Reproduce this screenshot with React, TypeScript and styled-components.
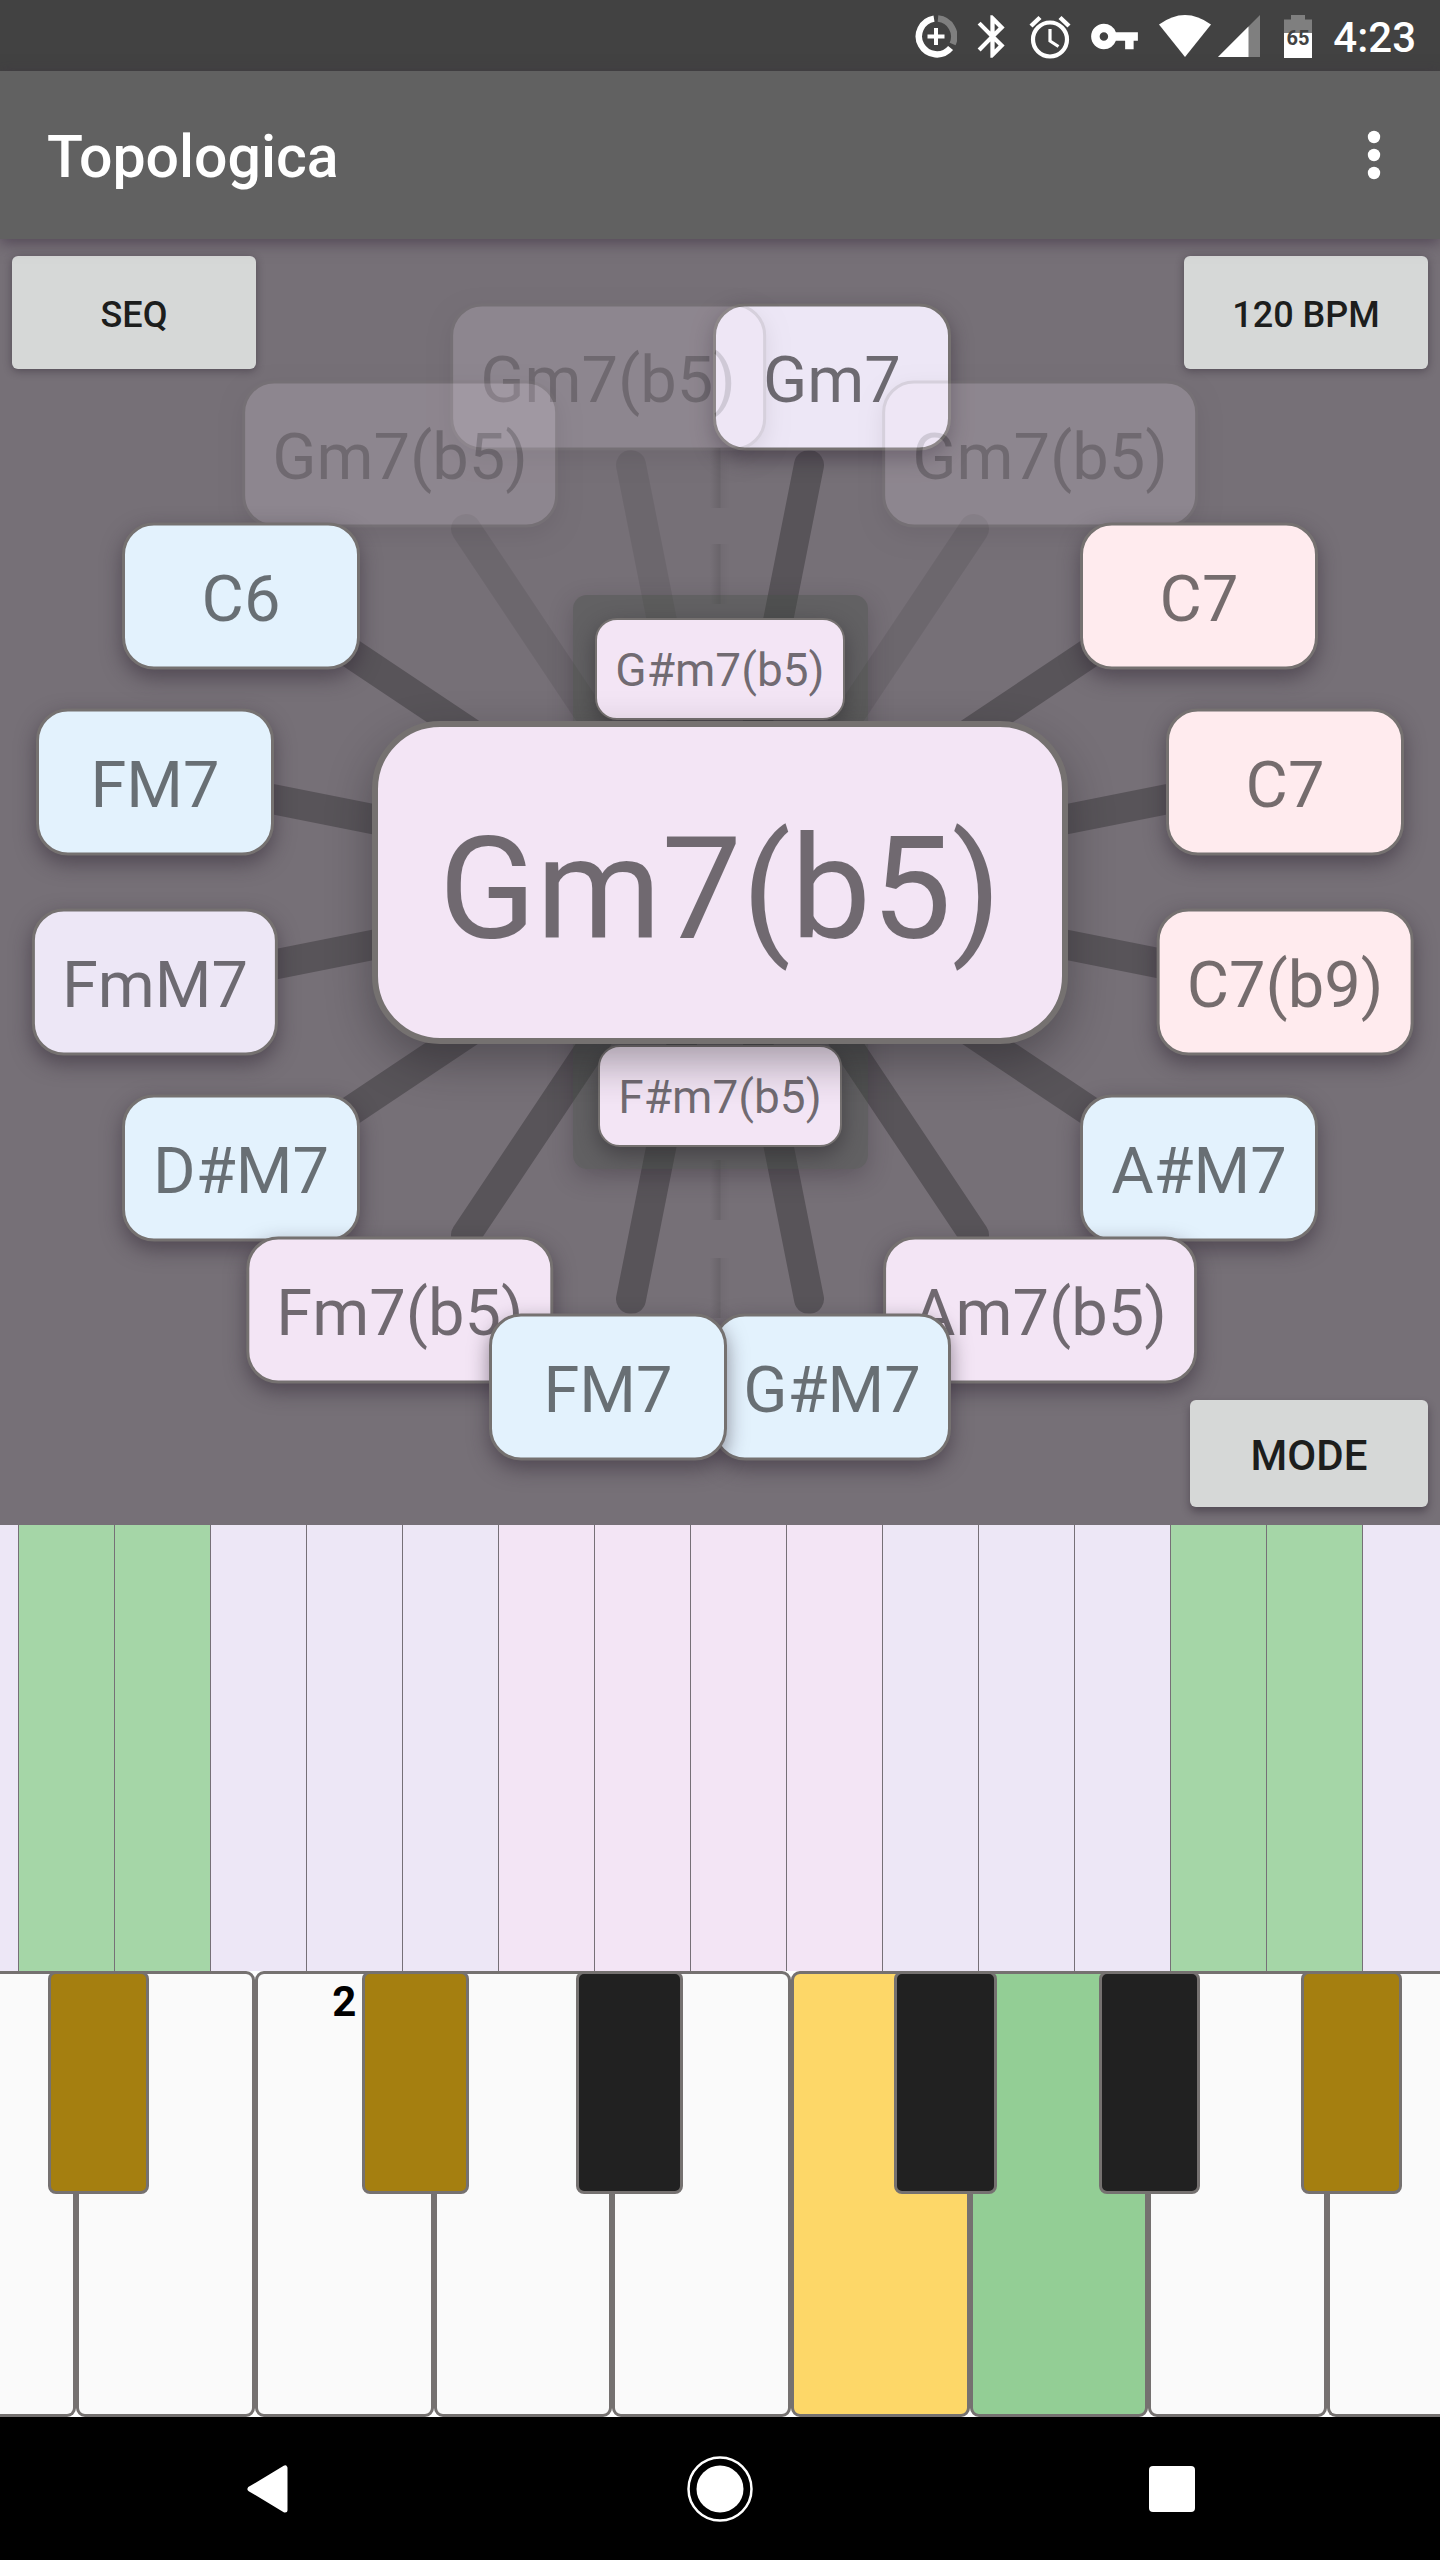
import React from "react";
import styled, { createGlobalStyle, css } from "styled-components";
import { MdBluetooth, MdVpnKey } from "react-icons/md";

const GlobalStyle = createGlobalStyle`
  *, *::before, *::after { box-sizing: border-box; }
  body { margin: 0; background: #000; }
  button { font: inherit; color: inherit; margin: 0; padding: 0; border: 0; cursor: pointer; }
`;

const outline = "#757170";
const tones = {
  lavender: "#ede7f6",
  pink: "#f3e5f5",
  blue: "#e3f2fd",
  red: "#ffebee",
  green: "#a5d6a7",
};
type Tone = keyof typeof tones;

const Screen = styled.div`
  display: flex;
  flex-direction: column;
  min-height: 100vh;
  font-family: Roboto, "Liberation Sans", sans-serif;
`;

const StatusBar = styled.div`
  display: flex;
  justify-content: flex-end;
  align-items: center;
  height: 71px;
  padding: 2px 24px 0 0;
  background: #424242;
  color: #fff;
`;

const StatusIcons = styled.div`
  display: flex;
  align-items: center;
  svg { display: block; }
`;

const IconSlot = styled.span<{ $width: number }>`
  display: flex;
  justify-content: center;
  width: ${(p) => p.$width}px;
`;

const Clock = styled.time`
  padding-top: 2px;
  font-size: 42px;
  font-weight: 500;
  line-height: 48px;
`;

const AppBar = styled.header`
  position: relative;
  z-index: 2;
  display: flex;
  align-items: center;
  justify-content: space-between;
  height: 168px;
  padding: 0 36px 0 47px;
  background: #616161;
  color: #fff;
  box-shadow: 0 4px 14px rgba(60, 45, 65, 0.6);
`;

const Title = styled.h1`
  margin: 0;
  padding-top: 4px;
  font-size: 59px;
  font-weight: 500;
  line-height: 72px;
`;

const MenuButton = styled.button`
  display: flex;
  justify-content: center;
  align-items: center;
  width: 60px;
  height: 96px;
  background: none;
`;

const Stage = styled.main`
  position: relative;
  flex: 1 0 auto;
  display: flex;
  flex-direction: column;
  justify-content: space-between;
  min-height: 1200px;
  padding: 17px 12px 18px;
  overflow: hidden;
  background: #767077;
`;

const ControlRow = styled.div<{ $end?: boolean }>`
  display: flex;
  justify-content: ${(p) => (p.$end ? "flex-end" : "space-between")};
`;

const ControlButton = styled.button<{ $large?: boolean }>`
  position: relative;
  z-index: 1;
  width: ${(p) => (p.$large ? 238 : 244)}px;
  height: ${(p) => (p.$large ? 107 : 113)}px;
  padding-top: 4px;
  border-radius: 6px;
  background: #d6d8d7;
  color: #1d1e1d;
  font-size: ${(p) => (p.$large ? 42 : 36)}px;
  font-weight: 500;
  box-shadow: 0 ${(p) => (p.$large ? 5 : 2)}px 8px rgba(40, 30, 45, 0.45);
`;

const Wheel = styled.div`
  position: absolute;
  inset: 0;
  display: grid;
  place-items: center;
`;

const Spokes = styled.svg`
  position: absolute;
  left: 50%;
  top: 50%;
  overflow: visible;
`;

const chordText = css`
  color: rgba(0, 0, 0, 0.54);
  white-space: nowrap;
  text-align: center;
`;

const ChordNode = styled.button<{ $tone: Tone; $ghost?: boolean }>`
  ${chordText}
  position: absolute;
  transform: translate(-50%, -50%);
  min-width: 238px;
  padding: 36px 27px 30px;
  border: 3px solid ${outline};
  border-radius: 32px;
  background: ${(p) => tones[p.$tone]};
  font-size: 65px;
  line-height: 75px;
  box-shadow: 0 8px 20px rgba(45, 35, 50, 0.5);
  ${(p) =>
    p.$ghost &&
    css`
      color: rgba(0, 0, 0, 0.66);
      opacity: 0.19;
    `}
`;

const Hub = styled.div`
  position: relative;
  display: flex;
  flex-direction: column;
  align-items: center;
  gap: 1px;
  width: 295px;
  padding: 23px 0 22px;
  border-radius: 14px;
  background: rgba(64, 74, 64, 0.37);
  box-shadow: 0 8px 24px rgba(45, 35, 50, 0.3);
`;

const NeighbourChord = styled.button`
  ${chordText}
  padding: 23px 18px 21px;
  border: 2px solid ${outline};
  border-radius: 22px;
  background: ${tones.pink};
  font-size: 46px;
  line-height: 54px;
  box-shadow: 0 8px 22px rgba(40, 35, 42, 0.5);
`;

const CurrentChord = styled.button`
  ${chordText}
  position: relative;
  z-index: 1;
  flex: none;
  padding: 79px 61px 65px;
  border: 6px solid ${outline};
  border-radius: 68px;
  background: ${tones.pink};
  font-size: 143px;
  line-height: 167px;
  box-shadow: 0 18px 44px rgba(30, 25, 32, 0.38);
`;

const Strip = styled.section`
  display: flex;
  height: 446px;
`;

const StripCell = styled.button<{ $tone: Tone; $span: number }>`
  flex: ${(p) => p.$span} 1 0;
  background: ${(p) => tones[p.$tone]};
  & + & { border-left: 1px solid #767077; }
  ${(p) => p.$tone === "green" && css`& + & { border-left-color: #5c7c5e; }`}
`;

const Keyboard = styled.section`
  position: relative;
  display: flex;
  height: 446px;
  overflow: hidden;
  background: #fff;
`;

const keyFills = {
  white: "#fafafa",
  yellow: "#fdd768",
  green: "#93ce95",
  black: "#212121",
  amber: "#a57f10",
};
type KeyFill = keyof typeof keyFills;

const WhiteKey = styled.button<{ $fill: KeyFill; $span: number }>`
  display: flex;
  justify-content: center;
  align-items: flex-start;
  flex: ${(p) => p.$span} 1 0;
  padding-top: 3px;
  border: 3px solid ${outline};
  border-radius: 9px;
  background: ${(p) => keyFills[p.$fill]};
  color: #000;
  font-size: 42px;
  font-weight: 700;
  line-height: 50px;
  &:first-child { border-left: 0; border-top-left-radius: 0; border-bottom-left-radius: 0; }
  &:nth-child(9) { border-right: 0; border-top-right-radius: 0; border-bottom-right-radius: 0; }
`;

const BlackKey = styled.button<{ $fill: KeyFill }>`
  position: absolute;
  top: 0;
  height: 50%;
  border: 3px solid ${outline};
  border-radius: 8px;
  background: ${(p) => keyFills[p.$fill]};
`;

const NavBar = styled.nav`
  display: grid;
  grid-template-columns: repeat(3, 1fr);
  place-items: center;
  height: 143px;
  padding: 0 42px;
  background: #000;
`;

const NavButton = styled.button`
  display: grid;
  place-items: center;
  width: 96px;
  height: 96px;
  background: none;
`;

type Chord = { name: string; angle: number; tone: Tone; ghost?: boolean };

// Angles run clockwise from the top; later entries are stacked above earlier ones.
const chords: Chord[] = [
  { name: "Gm7", angle: 11.25, tone: "lavender" },
  { name: "Gm7(b5)", angle: -11.25, tone: "pink", ghost: true },
  { name: "Gm7(b5)", angle: -33.75, tone: "pink", ghost: true },
  { name: "Gm7(b5)", angle: 33.75, tone: "pink", ghost: true },
  { name: "C6", angle: -56.25, tone: "blue" },
  { name: "C7", angle: 56.25, tone: "red" },
  { name: "FM7", angle: -78.75, tone: "blue" },
  { name: "C7", angle: 78.75, tone: "red" },
  { name: "FmM7", angle: -101.25, tone: "lavender" },
  { name: "C7(b9)", angle: 101.25, tone: "red" },
  { name: "D#M7", angle: -123.75, tone: "blue" },
  { name: "A#M7", angle: 123.75, tone: "blue" },
  { name: "Fm7(b5)", angle: -146.25, tone: "pink" },
  { name: "Am7(b5)", angle: 146.25, tone: "pink" },
  { name: "G#M7", angle: 168.75, tone: "blue" },
  { name: "FM7", angle: -168.75, tone: "blue" },
];

const onEllipse = (angle: number, rx: number, ry: number) => {
  const t = (angle * Math.PI) / 180;
  return { x: Math.round(rx * Math.sin(t)), y: Math.round(-ry * Math.cos(t)) };
};

function Spoke({ angle, ghost }: Chord) {
  const end = onEllipse(angle, 457, 425);
  const t = (angle * Math.PI) / 180;
  return (
    <line
      x1={end.x}
      y1={end.y}
      x2={end.x - 330 * Math.sin(t)}
      y2={end.y + 330 * Math.cos(t)}
      stroke="#000"
      strokeOpacity={ghost ? 0.08 : 0.25}
      strokeWidth={30}
      strokeLinecap="round"
    />
  );
}

const strip: [Tone, number][] = [
  ["lavender", 18], ["green", 96], ["green", 96], ["lavender", 96], ["lavender", 96],
  ["lavender", 96], ["pink", 96], ["pink", 96], ["pink", 96], ["pink", 96],
  ["lavender", 96], ["lavender", 96], ["lavender", 96], ["green", 96], ["green", 96],
  ["lavender", 78],
];

const whiteKeys: { note: string; fill: KeyFill; span: number; label?: string }[] = [
  { note: "A1", fill: "white", span: 76 },
  { note: "B1", fill: "white", span: 179 },
  { note: "C2", fill: "white", span: 179, label: "2" },
  { note: "D2", fill: "white", span: 179 },
  { note: "E2", fill: "white", span: 179 },
  { note: "F2", fill: "yellow", span: 179 },
  { note: "G2", fill: "green", span: 179 },
  { note: "A2", fill: "white", span: 179 },
  { note: "B2", fill: "white", span: 114 },
];

const blackKeys: { note: string; fill: KeyFill; start: number; width: number }[] = [
  { note: "A#1", fill: "amber", start: 48, width: 101 },
  { note: "C#2", fill: "amber", start: 362, width: 107 },
  { note: "D#2", fill: "black", start: 576, width: 107 },
  { note: "F#2", fill: "black", start: 894, width: 103 },
  { note: "G#2", fill: "black", start: 1099, width: 101 },
  { note: "A#2", fill: "amber", start: 1301, width: 101 },
];
const keyboardSpan = 1440;

function DataSaverIcon() {
  return (
    <svg width="42" height="43" viewBox="0 0 42 43" fill="none">
      <path d="M19 3.6A18 18 0 1 0 35.6 33" stroke="#fff" strokeWidth="6.5" />
      <path d="M23 3.6A18 18 0 0 1 37.6 29" stroke="#7f7f7f" strokeWidth="6.5" />
      <path d="M21 13v17M12.5 21.5h17" stroke="#fff" strokeWidth="4" />
    </svg>
  );
}

function AlarmIcon() {
  return (
    <svg width="42" height="44" viewBox="0 0 42 44" fill="none" stroke="#fff">
      <circle cx="21" cy="24.5" r="17" strokeWidth="4.2" />
      <path d="M21 14v12l8.5 5.5" strokeWidth="3.2" />
      <path d="M2 11L11 2.5M40 11L31 2.5" strokeWidth="4.4" />
    </svg>
  );
}

function BatteryIcon() {
  return (
    <svg width="28" height="44" viewBox="0 0 28 44">
      <path d="M0 4.5h7V0h14v4.5h7V18H0z" fill="#7f7f7f" />
      <path d="M0 18h28v25H0z" fill="#fff" />
      <text x="14" y="30" textAnchor="middle" fontFamily="Roboto, sans-serif" fontSize="20" fontWeight="700" fill="#424242">
        65
      </text>
    </svg>
  );
}

export default function App() {
  return (
    <Screen>
      <GlobalStyle />
      <StatusBar>
        <StatusIcons>
          <IconSlot $width={42}><DataSaverIcon /></IconSlot>
          <IconSlot $width={70}><MdBluetooth size={51} /></IconSlot>
          <IconSlot $width={46}><AlarmIcon /></IconSlot>
          <IconSlot $width={82}><MdVpnKey size={51} /></IconSlot>
          <IconSlot $width={60}>
            <svg width="52" height="43" viewBox="0 0 52 43">
              <path d="M0 9.5Q26-9.5 52 9.5L26 42z" fill="#fff" />
            </svg>
          </IconSlot>
          <IconSlot $width={48}>
            <svg width="42" height="43" viewBox="0 0 42 43">
              <path d="M0 42L42 0v42z" fill="#7f7f7f" />
              <path d="M0 42L30.500 11.500V42z" fill="#fff" />
            </svg>
          </IconSlot>
          <IconSlot $width={70}><BatteryIcon /></IconSlot>
        </StatusIcons>
        <Clock>4:23</Clock>
      </StatusBar>

      <AppBar>
        <Title>Topologica</Title>
        <MenuButton aria-label="More options">
          <svg width="14" height="50" viewBox="0 0 14 50" fill="#fff">
            <circle cx="7" cy="7" r="6.200" />
            <circle cx="7" cy="25" r="6.200" />
            <circle cx="7" cy="43" r="6.200" />
          </svg>
        </MenuButton>
      </AppBar>

      <Stage>
        <Wheel>
          <Spokes width="1" height="1">
            <defs>
              <linearGradient id="seam">
                <stop offset="0" stopColor="#000" stopOpacity="0" />
                <stop offset="0.5" stopColor="#000" stopOpacity="0.11" />
                <stop offset="0.55" stopColor="#000" stopOpacity="0.04" />
                <stop offset="1" stopColor="#000" stopOpacity="0" />
              </linearGradient>
            </defs>
            {[-434, -338, 278, 376].map((y) => (
              <rect key={y} x="-10" y={y} width="20" height="60" fill="url(#seam)" />
            ))}
            {chords.map((c) => <Spoke key={c.angle} {...c} />)}
          </Spokes>
          {chords.map((c) => {
            const { x, y } = onEllipse(c.angle, 576, 515);
            return (
              <ChordNode
                key={c.angle}
                $tone={c.tone}
                $ghost={c.ghost}
                style={{ left: `calc(50% + ${x}px)`, top: `calc(50% + ${y}px)` }}
              >
                {c.name}
              </ChordNode>
            );
          })}
          <Hub>
            <NeighbourChord>G#m7(b5)</NeighbourChord>
            <CurrentChord>Gm7(b5)</CurrentChord>
            <NeighbourChord>F#m7(b5)</NeighbourChord>
          </Hub>
        </Wheel>
        <ControlRow>
          <ControlButton>SEQ</ControlButton>
          <ControlButton>120 BPM</ControlButton>
        </ControlRow>
        <ControlRow $end>
          <ControlButton $large>MODE</ControlButton>
        </ControlRow>
      </Stage>

      <Strip aria-label="Note strip">
        {strip.map(([tone, span], i) => (
          <StripCell key={i} $tone={tone} $span={span} aria-label={`Step ${i + 1}`} />
        ))}
      </Strip>

      <Keyboard aria-label="Keyboard">
        {whiteKeys.map((k) => (
          <WhiteKey key={k.note} $fill={k.fill} $span={k.span} aria-label={k.note}>
            {k.label}
          </WhiteKey>
        ))}
        {blackKeys.map((k) => (
          <BlackKey
            key={k.note}
            $fill={k.fill}
            aria-label={k.note}
            style={{
              left: `${(k.start / keyboardSpan) * 100}%`,
              width: `${(k.width / keyboardSpan) * 100}%`,
            }}
          />
        ))}
      </Keyboard>

      <NavBar>
        <NavButton aria-label="Back">
          <svg width="42" height="48" viewBox="0 0 42 48">
            <path d="M3 24L38 3V45z" fill="#fff" stroke="#fff" strokeWidth="5" strokeLinejoin="round" />
          </svg>
        </NavButton>
        <NavButton aria-label="Home">
          <svg width="68" height="68" viewBox="0 0 68 68">
            <circle cx="34" cy="34" r="31.500" fill="none" stroke="#fff" strokeWidth="2.500" />
            <circle cx="34" cy="34" r="23.500" fill="#fff" />
          </svg>
        </NavButton>
        <NavButton aria-label="Recent apps">
          <svg width="46" height="46" viewBox="0 0 46 46">
            <rect width="46" height="46" rx="4" fill="#fff" />
          </svg>
        </NavButton>
      </NavBar>
    </Screen>
  );
}
